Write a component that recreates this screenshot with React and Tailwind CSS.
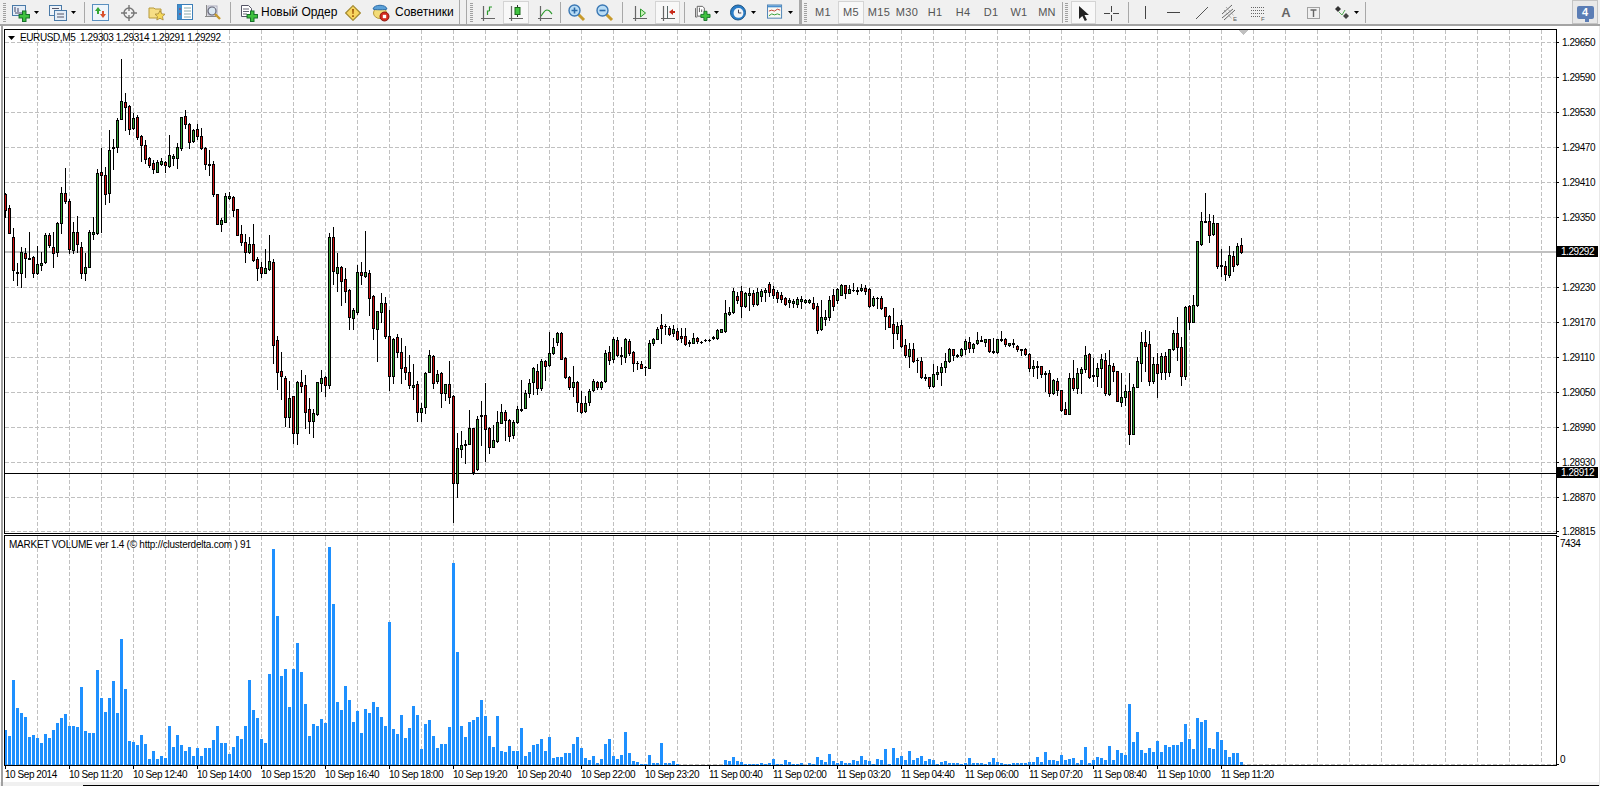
import React from 'react';

const FONT = { fontFamily: '"Liberation Sans", Arial, sans-serif' };

// candle rows: high, bodyTop, bodyBottom, low, colour. y = y0 + v / k
const seg = (y0, k, rows) =>
  rows.map(([h, t, b, l, c]) => [h, t, b, l].map((v) => Math.round(y0 + v / k)).concat(c));

const candles = [
  ...seg(50, 3, [
    [428,432,480,500,'r'],[465,475,550,550,'r'],[535,560,660,690,'r'],[640,665,670,705,'r'],[590,607,670,710,'g'],
    [595,610,625,682,'r'],[547,624,626,626,'g'],[618,622,670,680,'r'],[588,643,670,672,'g'],[605,640,646,660,'g'],
    [548,556,637,640,'g'],[548,556,585,590,'r'],[545,592,610,652,'r'],[515,520,607,617,'g'],[410,430,520,548,'g'],
    [355,430,452,458,'r'],[448,452,598,610,'r'],[515,547,600,610,'g'],[498,545,583,607,'r'],[575,590,670,683,'r'],
    [608,652,670,690,'g'],[540,547,652,652,'g'],[500,547,551,567,'g'],[358,370,550,553,'g'],[295,367,376,547,'r'],
    [350,376,432,462,'r'],[240,300,430,455,'g'],[268,292,295,357,'g'],[205,210,292,305,'g'],[28,154,208,208,'g'],
    [130,157,170,240,'r'],[165,168,238,252,'r'],[190,205,233,238,'g'],[195,202,260,268,'r'],[255,258,286,332,'r'],
    [270,286,326,338,'r'],[320,325,344,350,'r'],[330,340,358,368,'r'],[330,337,365,367,'g'],[325,334,341,345,'g'],
    [332,335,344,366,'r'],[255,316,347,352,'g'],[312,319,325,345,'g'],[278,290,325,354,'g'],[200,202,293,300,'g'],
    [180,198,222,233,'r'],[220,223,275,293,'r'],[238,241,272,276,'g'],[222,238,257,268,'r'],[235,259,293,296,'r'],
    [292,293,343,357,'r'],[300,343,346,375,'g'],[332,343,431,437,'r'],[433,433,521,521,'r'],[503,511,521,543,'g'],
    [430,438,515,516,'g'],[425,439,443,447,'g'],[437,441,480,498,'r'],[478,478,555,555,'r'],[525,552,575,585,'r'],
    [553,575,607,635,'r'],[562,583,607,610,'g'],[522,583,630,633,'r'],[622,628,653,690,'r'],[636,652,668,682,'r'],
    [598,655,668,670,'g'],[556,634,656,660,'g'],
  ]),
  ...seg(210, 3, [
    [148,157,405,458,'r'],[378,391,485,537,'r'],[427,484,497,567,'r'],[498,505,620,648,'r'],[513,565,620,650,'g'],
    [558,559,668,698,'r'],[512,517,668,703,'g'],[480,517,527,545,'r'],[495,525,605,653,'r'],[565,598,632,668,'r'],
    [597,610,632,680,'g'],[515,517,612,615,'g'],[480,505,518,543,'g'],[497,502,524,557,'r'],[68,82,524,533,'g'],
    [52,82,182,222,'r'],[130,172,188,242,'g'],[168,170,212,285,'r'],[175,208,242,275,'r'],[238,241,320,357,'r'],
    [295,300,323,357,'g'],[165,187,305,312,'g'],[155,187,194,222,'r'],[63,187,197,200,'g'],[180,190,263,315,'r'],
    [255,259,353,387,'r'],[303,304,356,452,'g'],[250,280,305,335,'g'],[262,280,377,385,'r'],[300,377,497,540,'r'],
    [385,388,497,518,'g'],[372,382,425,442,'r'],[385,427,473,518,'r'],[408,472,485,507,'r'],[435,487,525,533,'r'],
    [462,526,530,567,'g'],[513,523,605,632,'r'],
  ]),
  ...seg(300, 3, [
    [308,325,335,362,'g'],[215,220,322,340,'g'],[150,165,217,217,'g'],[165,168,248,265,'r'],[210,222,243,250,'g'],
    [215,218,278,320,'r'],[252,253,278,300,'g'],[183,253,290,308,'r'],[285,288,548,665,'r'],[398,445,548,590,'g'],
    [393,436,446,470,'g'],[420,433,436,490,'g'],[330,385,431,431,'g'],[384,385,515,523,'r'],[348,358,507,510,'g'],
    [303,346,349,435,'g'],[250,346,388,483,'r'],[380,385,440,460,'r'],[375,421,440,442,'g'],[333,365,422,425,'g'],
    [312,335,368,370,'g'],[330,335,360,420,'r'],[357,360,407,423,'r'],[360,365,404,413,'g'],[318,328,367,368,'g'],
    [240,326,331,332,'g'],[270,280,325,325,'g'],[238,250,278,290,'g'],[200,204,247,282,'g'],[192,212,265,282,'r'],
    [178,182,263,270,'g'],[180,184,198,240,'r'],[97,160,196,198,'g'],[115,140,160,162,'g'],[97,98,127,135,'g'],
    [97,98,176,178,'r'],[172,175,232,233,'r'],[228,232,260,268,'r'],[198,247,262,288,'g'],[243,245,306,333,'r'],
    [273,310,335,338,'r'],[288,308,334,336,'g'],[268,272,307,316,'g'],[238,244,271,274,'g'],[243,245,262,267,'r'],
    [243,245,262,266,'g'],[150,160,244,245,'g'],[138,157,181,192,'r'],[112,118,178,185,'g'],[112,120,164,168,'r'],
    [140,166,168,193,'r'],[115,118,170,185,'g'],[117,124,158,165,'r'],[153,157,190,212,'r'],[183,188,188,206,'g'],
    [183,193,203,205,'r'],[197,201,201,224,'g'],[120,130,203,205,'g'],[113,118,130,136,'g'],[82,87,117,118,'g'],
    [42,76,84,128,'r'],[72,78,78,102,'g'],[78,85,103,106,'r'],[75,88,100,107,'g'],[83,93,116,120,'r'],
    [85,107,115,125,'r'],[85,108,131,135,'r'],[120,127,128,137,'g'],[98,115,128,130,'g'],[110,115,124,130,'r'],
    [124,125,127,128,'g'],[118,120,121,124,'g'],[118,119,121,123,'g'],[109,112,115,117,'g'],[88,91,115,117,'g'],
    [87,88,95,95,'g'],[0,40,92,95,'g'],
  ]),
  ...seg(0, 1, [
    [307,312,314,315,'g'],[288,291,312,313,'g'],[292,296,300,303,'r'],[286,291,306,317,'r'],[292,293,306,307,'g'],
    [288,293,295,310,'g'],[290,293,304,306,'r'],[288,292,304,305,'g'],[289,291,296,301,'g'],[288,290,292,301,'g'],
    [282,284,292,296,'r'],[286,289,295,298,'r'],[290,292,298,302,'r'],[292,295,299,302,'r'],[297,298,304,305,'r'],
    [298,300,302,307,'g'],[299,301,303,307,'g'],[297,299,304,307,'g'],[296,299,301,308,'g'],[299,300,302,303,'g'],
    [299,300,302,303,'g'],[297,303,308,309,'r'],[303,306,330,333,'r'],[300,317,329,330,'g'],[310,317,319,325,'g'],
    [296,300,317,320,'g'],[289,295,306,310,'r'],[288,289,300,303,'g'],
  ]),
  ...seg(180, 3, [
    [312,316,344,346,'g'],[314,316,338,353,'r'],[316,328,338,340,'g'],[310,329,331,333,'g'],[322,330,332,341,'g'],
    [312,324,331,333,'g'],[315,324,332,342,'r'],[323,327,378,382,'r'],[348,355,376,378,'g'],[350,353,355,384,'g'],
    [347,355,385,387,'r'],[380,382,407,447,'r'],[405,408,440,442,'r'],[385,433,458,503,'r'],[425,438,460,477,'g'],
    [420,436,497,500,'r'],[478,496,525,530,'r'],[490,508,527,560,'g'],[490,508,543,546,'r'],[535,540,541,575,'g'],
    [530,544,590,593,'r'],[582,592,594,600,'g'],[590,592,618,623,'r'],[552,583,617,620,'g'],[558,577,583,597,'g'],
    [550,560,577,614,'g'],[520,544,562,575,'g'],[505,508,542,545,'g'],[507,508,526,540,'r'],[522,524,527,532,'g'],
    [505,508,525,527,'g'],[478,482,508,522,'g'],[470,487,503,515,'r'],[488,492,503,515,'g'],[457,481,490,492,'g'],
    [467,480,482,483,'g'],[476,478,485,497,'g'],[476,478,514,516,'r'],[475,514,516,518,'g'],[477,478,517,518,'g'],
    [453,476,480,482,'g'],[474,476,493,499,'r'],[490,490,496,498,'g'],[478,490,493,500,'g'],[494,498,508,512,'r'],
    [507,508,510,525,'g'],[505,507,523,525,'r'],[520,523,563,573,'r'],[540,559,563,587,'g'],[542,559,561,593,'g'],
    [557,559,581,590,'r'],[572,579,581,634,'g'],[570,579,638,648,'r'],[598,601,638,642,'g'],[595,603,629,644,'r'],
    [630,631,690,693,'r'],[667,688,701,702,'r'],[578,595,701,701,'g'],[541,595,624,630,'r'],[565,580,623,640,'g'],
    [560,566,580,640,'g'],[498,526,567,575,'g'],[520,522,590,593,'r'],[535,586,588,602,'g'],[550,565,587,617,'g'],
    [522,538,563,620,'g'],[520,541,638,645,'r'],[510,555,641,645,'g'],[550,559,573,603,'r'],[573,574,662,662,'r'],
    [580,652,665,678,'g'],[615,634,650,675,'g'],[580,634,762,792,'r'],[612,622,762,762,'g'],[530,544,620,622,'g'],
    [455,487,550,603,'g'],[450,487,497,572,'r'],[453,492,603,615,'r'],[530,553,602,610,'g'],[520,553,580,652,'r'],
    [520,528,575,598,'g'],[515,528,575,598,'r'],[508,508,575,587,'g'],[450,460,508,510,'g'],[412,460,500,540,'r'],
    [470,502,587,615,'r'],[378,380,587,597,'g'],[375,378,425,447,'r'],[345,374,425,425,'g'],[183,184,375,378,'g'],
    [95,124,191,195,'g'],[40,122,125,125,'g'],[103,124,164,186,'r'],[105,130,161,165,'g'],[128,130,257,265,'r'],
    [207,256,259,287,'g'],[243,259,283,300,'r'],[198,226,284,290,'g'],[213,229,257,273,'r'],[190,198,251,255,'g'],
    [175,196,216,218,'r'],
  ]),
];

const volTop = [
  ...[660,678,510,595,609,621,681,675,684,699,672,684,660,639,624,612,648,648,651,531,663,669,669,480,564,606,564,513,609,387,537,693,696,705,675,702,747,723,747,738,744,648,711,675,705,723,711,738,714,738,714,714,690,648,699,699,732,711,678,687,648,510,600,624,687,699,492,117,318,498,477,591,477,399,486,582,678,642,648,627,639,111,282,576,600,528,570,636,603,669,597,609,576,591,621,648,336,657,672,615,684,654,588,615].map((z) => 510 + z / 3),
  ...[657,582,570,618,654,642,642,591,99,366,588,621,576,570,561,510,558,618,651,558,663,666,648,663,663,594,678,666,645,642,627,663,621,684,681,681,669,669,642,621,654,684,690,678,699,687,642,627,678,687,675,606,669,693,696,702,702,675,699,699,639,699,699,693,702,705,705,705,705,705,705,705,705,705,705,705,690,693,681,693,696,702,702,702,702,699,702,699,687,702,702,690,696,702,702,699,705,699,702,681,690,696,672,693,699].map((z) => 530 + z / 3),
  ...[693,699,699,690,693,678,690,693,702,687,690,657,702,654,684,678,690,663,690,684,678,693,687,690,702,696,693,699,699,699,702,699,684,699,699,699,702,696,684,696,699,702,702,699,699,699,699,696,696,681,696,666,690,690,693,675,690,687,684,699,690,651,699,690,681,684,690,648,690,660,669,675,522,636,606,660,669,654,666,633,666,645,651,645,645,636,582,627,657,564,576,570,654,657,606,630,660,681,669,669,696].map((z) => 530 + z / 3),
].map(Math.round);

const priceRows = ['1.29650','1.29590','1.29530','1.29470','1.29410','1.29350',null,'1.29230','1.29170','1.29110','1.29050','1.28990','1.28930','1.28870'];
const timeLabels = ['10 Sep 2014','10 Sep 11:20','10 Sep 12:40','10 Sep 14:00','10 Sep 15:20','10 Sep 16:40','10 Sep 18:00','10 Sep 19:20','10 Sep 20:40','10 Sep 22:00','10 Sep 23:20','11 Sep 00:40','11 Sep 02:00','11 Sep 03:20','11 Sep 04:40','11 Sep 06:00','11 Sep 07:20','11 Sep 08:40','11 Sep 10:00','11 Sep 11:20'];
const gridX = Array.from({ length: 48 }, (_, k) => 37 + 32 * k);
const gridY = [42, 77, 112, 147, 182, 217, 252, 287, 322, 357, 392, 427, 462, 497, 531];

const Grip = ({ className = '' }) => (
  <div className={`h-[19px] self-center bg-[repeating-linear-gradient(to_bottom,#a0a0a0_0,#a0a0a0_1px,transparent_1px,transparent_2px)] ${className}`} />
);
const Sep = ({ className = '' }) => <div className={`w-px h-[21px] self-center bg-[#a8a8a8] ${className}`} />;
const Arrow = ({ className = '' }) => (
  <svg width="5" height="3" viewBox="0 0 5 3" className={`self-center ${className}`}><path d="M0 0h5L2.5 3z" fill="#000" /></svg>
);
const Cell = ({ className = '', active, children }) => (
  <div className={`h-[23px] mt-px flex items-center justify-center ${active ? 'bg-[#f8f8f8] border border-[#d4d4d4]' : ''} ${className}`}>{children}</div>
);

const Ic = ({ s = 18, children }) => <svg width={s} height={s} viewBox={`0 0 ${s} ${s}`}>{children}</svg>;
const Plus = ({ x = 6, y = 6 }) => (
  <path transform={`translate(${x} ${y}) scale(1.15)`} d="M3.5.5h3v3h3v3h-3v3h-3v-3h-3v-3h3z" fill="#3fc23f" stroke="#17702a" strokeWidth=".9" />
);
const Axes = () => <path d="M3.5 1v15M1 13.5h14" stroke="#666" strokeWidth="1.2" fill="none" />;
const Lens = ({ sign }) => (
  <g>
    <path d="M10.5 10.5l5.5 5.5" stroke="#c79a2c" strokeWidth="3" />
    <circle cx="6.5" cy="6.5" r="5.5" fill="#b8dcf5" stroke="#3b78b4" strokeWidth="1.4" />
    <path d={sign === '+' ? 'M3.5 6.5h6M6.5 3.5v6' : 'M3.5 6.5h6'} stroke="#2a6aa8" strokeWidth="1.6" />
  </g>
);

const icons = {
  newChart: (
    <Ic><rect x=".5" y="1.5" width="13" height="10" fill="#e4edf7" stroke="#4a7aa8" /><path d="M3 3v5M6 4v4M3 9h8" stroke="#446" /><Plus x={6.5} y={6.5} /></Ic>
  ),
  charts: (
    <Ic><rect x=".5" y="1.5" width="12" height="10" fill="#eef3f9" stroke="#4a7aa8" /><rect x="5.5" y="6.5" width="12" height="10" fill="#e4edf7" stroke="#4a7aa8" /><path d="M3 4.5h7M8 10h7M8 13h7" stroke="#556" /></Ic>
  ),
  market: (
    <Ic><rect x=".5" y=".5" width="16" height="16" fill="#eef5fb" stroke="#5a90c0" /><path d="M6 3L3 7h2v3h2V7h2z" fill="#35a835" /><path d="M11 14l3-4h-2V7h-2v3H8z" fill="#d8502a" /></Ic>
  ),
  cross: (
    <Ic s={16}><circle cx="8" cy="8" r="5" fill="none" stroke="#777" strokeWidth="1.4" /><path d="M8 0v6M8 10v6M0 8h6M10 8h6" stroke="#777" strokeWidth="1.4" /></Ic>
  ),
  folder: (
    <Ic><path d="M1 4h5l1 1h6v9H1z" fill="#f6de86" stroke="#b79a3a" /><path d="M12 6.5l1.6 3.3 3.4.4-2.5 2.4.7 3.4-3.2-1.7-3.2 1.7.7-3.4-2.5-2.4 3.4-.4z" fill="#f6d95a" stroke="#a4873a" strokeWidth=".8" /></Ic>
  ),
  nav: (
    <Ic s={17}><rect x=".5" y=".5" width="15" height="15" fill="#fff" stroke="#3d7fb8" /><rect x="1" y="1" width="4" height="14" fill="#3d8fd0" /><path d="M7 4h7M7 7h7M7 10h7M7 13h7" stroke="#8aa" /><path d="M2 5h2M2 10h2" stroke="#c33" /></Ic>
  ),
  search: (
    <Ic><path d="M2.5 1v12M1 12.5h11" stroke="#888" /><rect x="4" y="2" width="9" height="9" fill="#eef2f6" stroke="#aab" /><circle cx="8" cy="7" r="4" fill="#dbe8f2" stroke="#667" strokeWidth="1.2" /><path d="M11 10l5 5" stroke="#c79a2c" strokeWidth="2.4" /></Ic>
  ),
  order: (
    <Ic><path d="M1.5 1.5h7l3 3v8h-10z" fill="#fff" stroke="#556" /><path d="M3 5h6M3 7.5h6M3 10h4" stroke="#667" /><Plus x={6.5} y={6.5} /></Ic>
  ),
  alert: (
    <Ic s={16}><path d="M8 .7L15.3 8 8 15.3.7 8z" fill="#f8d660" stroke="#a38a30" strokeWidth="1.2" /><path d="M7 4h2l-.4 5H7.4zM7.1 10.2h1.8V12H7.1z" fill="#a5600f" /></Ic>
  ),
  experts: (
    <Ic><ellipse cx="8" cy="9" rx="6.5" ry="5.5" fill="#f3dc78" stroke="#b79a3a" /><path d="M1 5c1-5 13-5 14 0 0 1-14 1-14 0z" fill="#5aa0d8" stroke="#2e6da8" /><circle cx="12.5" cy="12.5" r="4.5" fill="#d42a1e" stroke="#8a1a12" /><rect x="10.8" y="10.8" width="3.4" height="3.4" fill="#fff" /></Ic>
  ),
  bars: (
    <Ic s={16}><Axes /><path d="M7.5 10V6h2M9.5 6V2H12" stroke="#2d9a2d" strokeWidth="1.2" fill="none" /></Ic>
  ),
  candle: (
    <Ic s={16}><Axes /><path d="M9.5 0v12" stroke="#333" /><rect x="7" y="2.5" width="5" height="7" fill="#41c441" stroke="#1c6a1c" /></Ic>
  ),
  line: (
    <Ic s={16}><Axes /><path d="M4 11c2-2 3-6 6-6s3 2 5 4" stroke="#2d9a2d" strokeWidth="1.2" fill="none" /></Ic>
  ),
  scroll: (
    <Ic s={16}><Axes /><path d="M8.5 4l5 4-5 4z" fill="#c5f0b5" stroke="#2d9a2d" /></Ic>
  ),
  shift: (
    <Ic s={16}><Axes /><path d="M7.5 1v13" stroke="#566" /><path d="M9 7l4-3v2h2v2h-2v2z" fill="#c92a1a" /></Ic>
  ),
  template: (
    <Ic><path d="M2.5 1.5h6l2 2v9h-8z" fill="#fff" stroke="#555" /><path d="M.5 3.5v10h2" fill="none" stroke="#555" /><path d="M5 3v5M7.5 5v3" stroke="#555" /><Plus x={6} y={6.5} /></Ic>
  ),
  clock: (
    <Ic s={17}><circle cx="8.5" cy="8.5" r="8" fill="#2a7dc8" stroke="#17507f" /><circle cx="9" cy="9" r="5.2" fill="#f2f5f8" /><path d="M9 5.5V9h3" stroke="#334" fill="none" /></Ic>
  ),
  indicators: (
    <Ic s={17}><rect x=".5" y=".5" width="15" height="14" fill="#f8f8f4" stroke="#4a80b4" /><rect x="1" y="1" width="14" height="2" fill="#4a90d0" /><path d="M2 7l3-1 3 1 3-2 3 1" stroke="#c0392b" fill="none" /><path d="M2 12l3-2 3 1 3-1 3 1" stroke="#2d9a2d" fill="none" /></Ic>
  ),
  cursor: (
    <Ic s={16}><path d="M3 1l0 13 3.3-3 2.5 5 2.2-1-2.5-5h4.5z" fill="#222" /></Ic>
  ),
  thin: (
    <Ic s={16}><path d="M8.5 .5v6M8.5 10v6M.5 8.5h6M10 8.5h6" stroke="#444" shapeRendering="crispEdges" /></Ic>
  ),
  vline: <svg width="1" height="13"><rect width="1" height="13" fill="#444" /></svg>,
  hline: <svg width="13" height="1"><rect width="13" height="1" fill="#444" /></svg>,
  trend: (
    <Ic s={14}><path d="M1 13L13 1" stroke="#555" strokeWidth="1" /></Ic>
  ),
  fibo: (
    <Ic s={17}><path d="M1 10l10-9M1 14l11-9M3 16L14 6" stroke="#666" /><path d="M3 6l8 9M5 3l8 9" stroke="#888" strokeDasharray="1 1" /><text x="12" y="17" fontSize="6" fill="#555" fontFamily="Liberation Sans">E</text></Ic>
  ),
  grid: (
    <Ic s={16}><path d="M1 2.5h13M1 5.5h13M1 8.5h13M1 11.5h10" stroke="#666" strokeDasharray="1 1" /><text x="11" y="16" fontSize="6" fill="#555" fontFamily="Liberation Sans">F</text></Ic>
  ),
  text: (
    <Ic s={14}><rect x=".5" y="1.5" width="12" height="11" fill="none" stroke="#555" strokeDasharray="1 1" /><path d="M3.5 4h6M6.5 4v7" stroke="#666" strokeWidth="1.4" /></Ic>
  ),
  arrows: (
    <Ic s={15}><path d="M3 1l3 3-3 3-3-3z" fill="#333" /><path d="M4 7l3 3 3-5" stroke="#5a5" fill="none" /><path d="M11 8l3 3-3 3-3-3z" fill="#444" /></Ic>
  ),
};

const Toolbar = () => (
  <div className="h-[26px] shrink-0 flex items-start border-b-2 border-[#a4a4a4] bg-[#f0f0f0]">
    <Grip className="w-[3px] ml-[3px] mr-[3px]" />
    <Cell className="w-[23px]">{icons.newChart}</Cell>
    <Cell className="w-[9px]"><Arrow /></Cell>
    <Cell className="w-[23px] ml-[5px]">{icons.charts}</Cell>
    <Cell className="w-[9px]"><Arrow /></Cell>
    <Sep className="ml-[6px]" />
    <Cell className="w-[28px] ml-[2px]">{icons.market}</Cell>
    <Cell className="w-[28px]">{icons.cross}</Cell>
    <Cell className="w-[28px]">{icons.folder}</Cell>
    <Cell className="w-[28px]">{icons.nav}</Cell>
    <Cell className="w-[28px]">{icons.search}</Cell>
    <Sep className="ml-[3px]" />
    <Cell className="w-[18px] ml-[9px]">{icons.order}</Cell>
    <span className="w-[73px] ml-[3px] mt-[5px] text-[12px] leading-[15px] text-black whitespace-nowrap">Новый Ордер</span>
    <Cell className="w-[16px] ml-[11px]">{icons.alert}</Cell>
    <Cell className="w-[18px] ml-[11px]">{icons.experts}</Cell>
    <span className="w-[58px] ml-[5px] mt-[5px] text-[12px] leading-[15px] text-black whitespace-nowrap">Советники</span>
    <div className="w-[8px] h-[24px] ml-[6px] border-x border-[#a8a8a8]" />
    <Grip className="w-[3px] ml-[3px]" />
    <Cell className="w-[28px] ml-[1px]">{icons.bars}</Cell>
    <Cell active className="w-[26px] ml-[1px]">{icons.candle}</Cell>
    <Cell className="w-[31px]">{icons.line}</Cell>
    <Sep />
    <Cell className="w-[32px]"><Ic><Lens sign="+" /></Ic></Cell>
    <Cell className="w-[24px]"><Ic><Lens sign="-" /></Ic></Cell>
    <Sep className="ml-[5px]" />
    <Cell className="w-[30px] ml-[2px]">{icons.scroll}</Cell>
    <Cell active className="w-[25px]">{icons.shift}</Cell>
    <Sep className="ml-[4px]" />
    <Cell className="w-[16px] ml-[10px]">{icons.template}</Cell>
    <Cell className="w-[5px] ml-[3px]"><Arrow /></Cell>
    <Cell className="w-[16px] ml-[11px]">{icons.clock}</Cell>
    <Cell className="w-[5px] ml-[5px]"><Arrow /></Cell>
    <Cell className="w-[16px] ml-[11px]">{icons.indicators}</Cell>
    <Cell className="w-[5px] ml-[5px]"><Arrow /></Cell>
    <div className="w-[3px] h-[24px] ml-[6px] bg-[#a8a8a8]" />
    <Grip className="w-[3px] ml-[2px]" />
    <div className="flex ml-[2px] text-[11px] tracking-[0.3px] text-[#555]">
      {['M1', 'M5', 'M15', 'M30', 'H1', 'H4', 'D1', 'W1', 'MN'].map((tf) => (
        <div key={tf} className="w-[28px] flex justify-center">
          <Cell active={tf === 'M5'} className={tf === 'M5' ? 'w-[26px]' : 'w-[28px]'}>{tf}</Cell>
        </div>
      ))}
    </div>
    <Sep className="ml-[1px]" />
    <Grip className="w-[3px] ml-[2px]" />
    <Cell active className="w-[25px] ml-[3px]">{icons.cursor}</Cell>
    <Cell className="w-[30px]">{icons.thin}</Cell>
    <Sep className="ml-[2px]" />
    <Cell className="w-[32px]">{icons.vline}</Cell>
    <Cell className="w-[25px]">{icons.hline}</Cell>
    <Cell className="w-[32px]">{icons.trend}</Cell>
    <Cell className="w-[23px]">{icons.fibo}</Cell>
    <Cell className="w-[34px]">{icons.grid}</Cell>
    <Cell className="w-[22px] text-[13px] font-bold text-[#666]">A</Cell>
    <Cell className="w-[33px]">{icons.text}</Cell>
    <Cell className="w-[24px]">{icons.arrows}</Cell>
    <Cell className="w-[5px]"><Arrow /></Cell>
    <Sep className="ml-[6px]" />
    <div className="ml-auto mr-[2px] w-[26px] h-[24px] border border-[#c4c4c4] bg-[#e8e8e8] flex items-center justify-center">
      <div className="relative w-[17px] h-[13px] rounded-[2px] bg-[#5b7db5] flex items-center justify-center text-[11px] leading-none font-bold text-white">
        4
        <span className="absolute left-[8px] -bottom-[3px] w-[4px] h-[3px] bg-[#5b7db5]" />
      </div>
    </div>
  </div>
);

const GridLines = ({ horizontal, y0, y1 }) => (
  <g stroke="#c0c0c0" strokeDasharray="4 2" shapeRendering="crispEdges">
    {gridX.map((x) => <line key={x} x1={x + 0.5} x2={x + 0.5} y1={y0} y2={y1} />)}
    {horizontal.map((y) => <line key={y} x1="5" x2="1556" y1={y + 0.5} y2={y + 0.5} />)}
  </g>
);

const PriceChart = () => (
  <svg className="block w-full h-full" viewBox="5 30 1551 503" shapeRendering="crispEdges">
    <GridLines horizontal={gridY} y0={30} y1={533} />
    <rect x="5" y="251" width="1551" height="2" fill="#c0c0c0" />
    <rect x="5" y="473" width="1551" height="1" fill="#000" />
    <path d="M1238 30h10l-5 5z" fill="#c0c0c0" />
    {candles.map(([hi, top, bot, lo, c], i) => {
      const x = 5 + 4 * i;
      return (
        <g key={i}>
          <rect x={x} y={hi} width="1" height={lo - hi + 1} fill="#000" />
          <rect x={x - 1} y={top} width="3" height={bot - top + 1} fill="#000" />
          {bot - top >= 2 && (
            <rect x={x} y={top + 1} width="1" height={bot - top - 1} fill={c === 'r' ? '#cc1010' : '#32a032'} />
          )}
        </g>
      );
    })}
  </svg>
);

const VolumeChart = () => (
  <svg className="block w-full h-full" viewBox="5 536 1551 229" shapeRendering="crispEdges">
    <GridLines horizontal={[764]} y0={536} y1={765} />
    {volTop.map((y, i) => (y < 765 ? <rect key={i} x={4 + 4 * i} y={y} width="3" height={765 - y} fill="#1e90ff" /> : null))}
  </svg>
);

const App = () => (
  <div style={FONT} className="w-[1600px] h-[786px] overflow-hidden bg-white flex flex-col text-[10px] tracking-[-0.45px] leading-[11px] text-black">
    <div className="tracking-normal"><Toolbar /></div>
    <div className="flex-1 flex flex-col pl-[4px] border-r border-[#e8e8e8] relative">
      <div className="absolute left-px top-0 bottom-0 w-[2px] bg-[#a0a0a0]" />
      <div className="pt-[3px] flex flex-col">
        <div className="h-[505px] flex">
          <div className="relative w-[1553px] h-full border border-black shrink-0">
            <PriceChart />
            <div className="absolute left-[3px] top-[2px] flex items-center gap-[5px] whitespace-nowrap tracking-[-0.4px]">
              <svg width="7" height="4"><path d="M0 0h7L3.5 4z" fill="#000" /></svg>
              <span>EURUSD,M5&nbsp; 1.29303 1.29314 1.29291 1.29292</span>
            </div>
          </div>
          <div className="relative flex-1 flex flex-col mt-[-4px]">
            {priceRows.map((label, i) => (
              <div key={i} className="h-[35px] shrink-0 flex items-center">
                {label ? (
                  <>
                    <span className="w-[2px] h-px bg-black mr-[3px]" />
                    <span>{label}</span>
                  </>
                ) : (
                  <span className="w-[41px] h-[11px] pl-[4px] -mt-[2px] bg-black text-white">1.29292</span>
                )}
              </div>
            ))}
            <div className="h-[11px] shrink-0 mt-[11px] flex items-center">
              <span className="w-[2px] h-px bg-black mr-[3px]" />
              <span>1.28815</span>
            </div>
            <span className="absolute left-0 top-[442px] w-[41px] h-[11px] pl-[4px] bg-black text-white">1.28912</span>
          </div>
        </div>
        <div className="h-[231px] mt-px flex">
          <div className="relative w-[1553px] h-full border border-black shrink-0">
            <VolumeChart />
            <span className="absolute left-[4px] top-[3px] whitespace-nowrap tracking-[-0.23px]">MARKET VOLUME ver 1.4 (© http://clusterdelta.com ) 91</span>
          </div>
          <div className="relative flex-1 flex flex-col justify-between pt-[3px] pb-[1px] pl-[3px]">
            <span className="absolute left-0 top-px w-[2px] h-px bg-black" />
            <span>7434</span>
            <span>0</span>
            <span className="absolute left-0 bottom-[1px] w-[2px] h-px bg-black" />
          </div>
        </div>
        <div className="h-[16px] flex">
          {timeLabels.map((t) => (
            <div key={t} className="w-[64px] shrink-0 flex flex-col">
              <span className="w-px h-[3px] bg-black ml-px" />
              <span className="whitespace-nowrap pl-px">{t}</span>
            </div>
          ))}
        </div>
      </div>
      <div className="mt-auto h-[4px] -ml-[4px] flex">
        <div className="w-[83px] bg-[#f0f0f0]" />
        <div className="flex-1 bg-[#f0f0f0] border-b border-black" />
      </div>
    </div>
  </div>
);

export default App;
